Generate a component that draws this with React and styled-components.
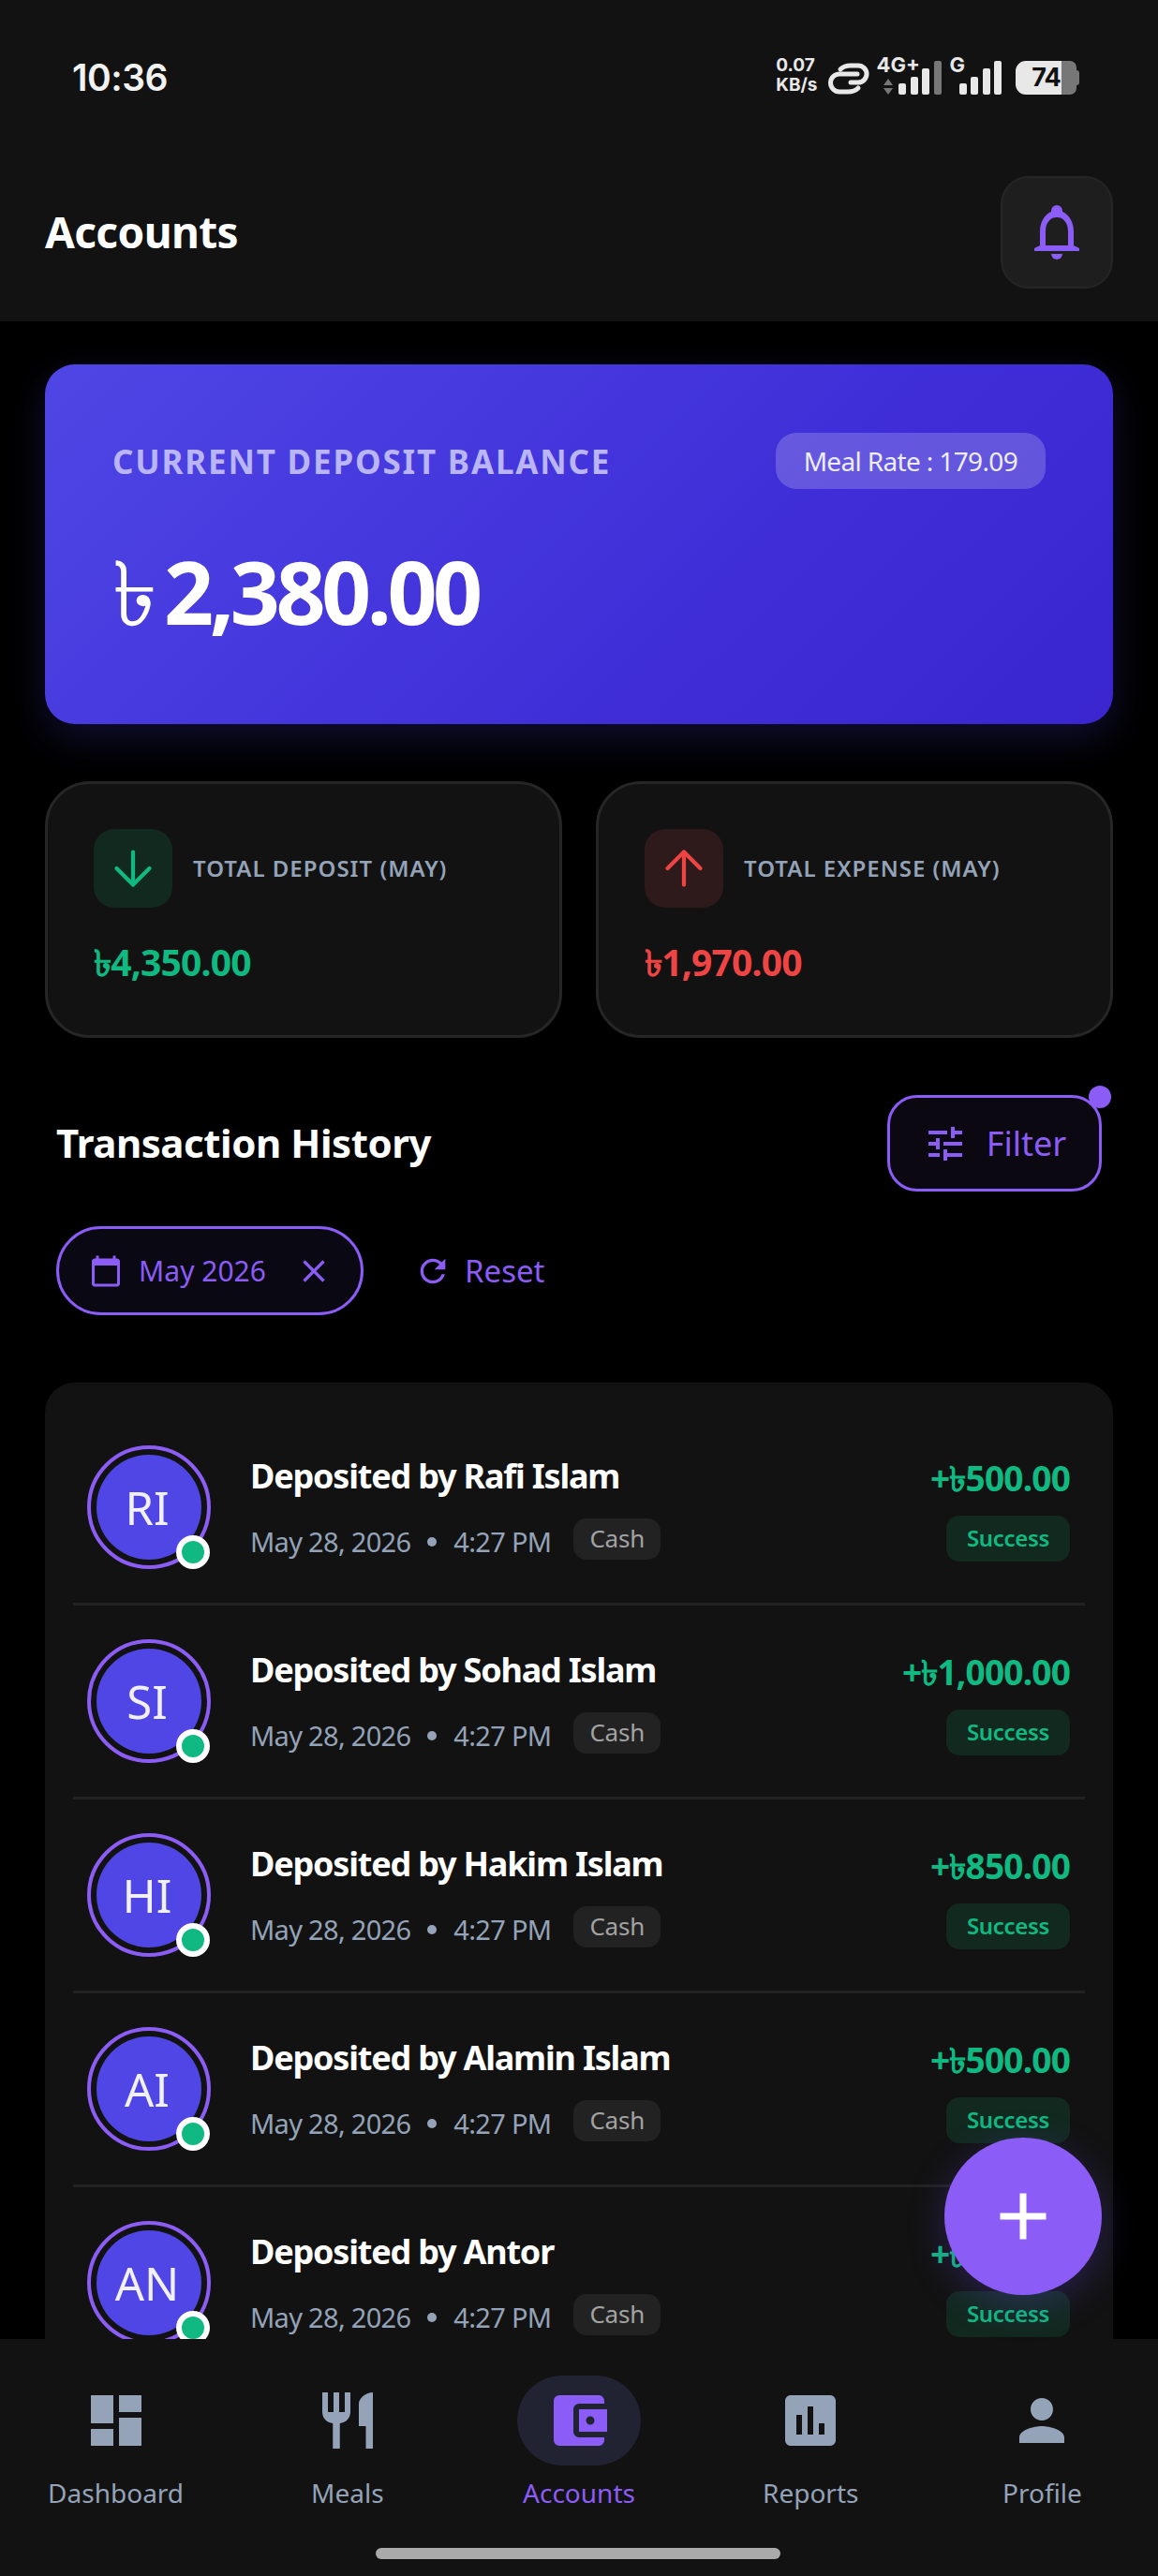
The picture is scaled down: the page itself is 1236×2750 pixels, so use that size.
import React from "react";
import styled, { createGlobalStyle } from "styled-components";
import { ArrowDown, ArrowUp } from "lucide-react";
import {
  MdDashboard,
  MdRestaurant,
  MdAccountBalanceWallet,
  MdAssessment,
  MdPerson,
  MdTune,
  MdCalendarToday,
  MdClose,
  MdRefresh,
  MdAdd,
} from "react-icons/md";

const GlobalStyle = createGlobalStyle`
  html, body {
    margin: 0;
    padding: 0;
    background: #000;
  }
  * {
    box-sizing: border-box;
  }
`;

const PURPLE = "#8b5cf6";
const GREEN = "#10b981";
const RED = "#ef4444";
const SLATE = "#94a3b8";
const FONT = `"Noto Sans", "Open Sans", "DejaVu Sans", sans-serif`;

const Phone = styled.div`
  position: relative;
  width: 1236px;
  height: 2750px;
  background: #000;
  overflow: hidden;
  display: flex;
  flex-direction: column;
  font-family: ${FONT};
  color: #fff;
`;

const Header = styled.header`
  flex: none;
  height: 343px;
  background: #121212;
`;

const StatusBar = styled.div`
  height: 164px;
  padding: 0 84px 0 77px;
  display: flex;
  align-items: center;
  justify-content: space-between;
`;

const Clock = styled.div`
  font-family: Inter, sans-serif;
  font-size: 39px;
  font-weight: 600;
  letter-spacing: -0.5px;
  color: #f2f2f2;
`;

const StatusIcons = styled.div`
  display: flex;
  align-items: flex-end;
  height: 42px;
  margin-top: -5px;
  font-family: Inter, sans-serif;
  font-weight: 700;
  color: #e8e8e8;
`;

const NetSpeed = styled.div`
  font-size: 19px;
  line-height: 21px;
  margin-right: 11px;
`;

const LinkIcon = styled.svg`
  width: 46px;
  height: 36px;
  margin-right: 6px;
`;

const Carrier = styled.div`
  position: relative;
  display: flex;
  align-items: flex-end;
  gap: 4.5px;
  height: 42px;
  padding-left: ${(p) => p.$pad}px;
  margin-right: ${(p) => p.$gap}px;
`;

const CarrierLabel = styled.span`
  position: absolute;
  left: 0;
  top: -2px;
  font-size: 22px;
  line-height: 24px;
`;

const Updown = styled.svg`
  width: 10px;
  height: 17px;
  margin-right: 2px;
`;

const Bar = styled.span`
  width: 8px;
  height: ${(p) => p.$h}px;
  border-radius: 2px;
  background: ${(p) => (p.$off ? "#777" : "#e8e8e8")};
`;

const Battery = styled.div`
  width: 65px;
  height: 36px;
  border-radius: 11px 7px 7px 11px;
  background: linear-gradient(90deg, #e8e8e8 76%, #777 76%);
  color: #111;
  font-size: 27px;
  line-height: 36px;
  text-align: center;
  letter-spacing: -1px;
`;

const BatteryCap = styled.span`
  width: 3px;
  height: 16px;
  margin-bottom: 10px;
  border-radius: 0 3px 3px 0;
  background: #777;
`;

const TitleRow = styled.div`
  padding: 24px 48px 35px;
  display: flex;
  align-items: center;
  justify-content: space-between;
`;

const PageTitle = styled.h1`
  margin: -2px 0 0;
  font-size: 46px;
  font-weight: 700;
  letter-spacing: -0.6px;
`;

const BellButton = styled.div`
  width: 120px;
  height: 120px;
  border-radius: 30px;
  background: #1e1e1e;
  border: 2px solid #262626;
  display: flex;
  align-items: center;
  justify-content: center;
`;

const BellIcon = styled.svg`
  width: 48px;
  height: 58px;
  fill: ${PURPLE};
`;

const Content = styled.main`
  flex: 1;
  min-height: 0;
  overflow: hidden;
  padding: 46px 48px 0;
`;

const BalanceCard = styled.section`
  height: 384px;
  padding: 73px 72px 0;
  border-radius: 32px;
  background: linear-gradient(135deg, #4f46e5 0%, #3f2fd8 60%, #3a25cf 100%);
  box-shadow: 0 14px 44px rgba(79, 70, 229, 0.22);
`;

const BalanceTop = styled.div`
  display: flex;
  align-items: center;
  justify-content: space-between;
`;

const BalanceLabel = styled.div`
  font-size: 35px;
  font-weight: 700;
  letter-spacing: 1.8px;
  color: #b9b5f6;
`;

const RatePill = styled.div`
  height: 60px;
  padding: 0 30px;
  border-radius: 22px;
  background: rgba(255, 255, 255, 0.2);
  font-size: 28px;
  line-height: 60px;
  letter-spacing: -0.65px;
  color: #eeedff;
`;

const BalanceAmount = styled.div`
  margin-top: 54px;
  display: flex;
  align-items: center;
  gap: 7px;
  font-size: 93px;
  line-height: 110px;
  font-weight: 700;
  letter-spacing: -4.5px;
`;

const BalanceSign = styled.span`
  font-size: 96px;
  font-weight: 400;
  letter-spacing: 0;
`;

const StatGrid = styled.section`
  margin-top: 61px;
  display: grid;
  grid-template-columns: 1fr 1fr;
  gap: 36px;
`;

const StatCard = styled.div`
  height: 274px;
  padding: 48px 49px 0;
  border-radius: 48px;
  background: #121212;
  border: 3px solid #262626;
`;

const StatHead = styled.div`
  display: flex;
  align-items: center;
  gap: 24px;
`;

const StatIcon = styled.div`
  flex: none;
  width: 84px;
  height: 84px;
  border-radius: 22px;
  display: flex;
  align-items: center;
  justify-content: center;
  background: ${(p) => (p.$tone === "up" ? "#2e1a1a" : "#12291f")};
  color: ${(p) => (p.$tone === "up" ? RED : GREEN)};
`;

const StatLabel = styled.div`
  margin: -2px 0 0 -2px;
  font-size: 24px;
  font-weight: 600;
  letter-spacing: 1px;
  color: ${SLATE};
`;

const StatValue = styled.div`
  margin-top: 33px;
  font-size: 39px;
  line-height: 50px;
  font-weight: 700;
  letter-spacing: -0.8px;
  color: ${(p) => (p.$tone === "up" ? RED : GREEN)};
`;

const HistoryHead = styled.div`
  margin-top: 61px;
  padding: 0 12px;
  display: flex;
  align-items: center;
  justify-content: space-between;
`;

const HistoryTitle = styled.h2`
  margin: -2px 0 0;
  font-size: 42px;
  font-weight: 700;
  letter-spacing: -0.45px;
`;

const FilterButton = styled.div`
  position: relative;
  width: 229px;
  height: 103px;
  border: 3px solid ${PURPLE};
  border-radius: 32px;
  background: #0b0812;
  display: flex;
  align-items: center;
  justify-content: center;
  gap: 20px;
  color: ${PURPLE};
  font-size: 36px;
`;

const FilterDot = styled.span`
  position: absolute;
  top: -13px;
  right: -13px;
  width: 24px;
  height: 24px;
  border-radius: 50%;
  background: ${PURPLE};
`;

const ChipRow = styled.div`
  margin-top: 37px;
  padding: 0 12px;
  display: flex;
  align-items: center;
  gap: 54px;
  color: ${PURPLE};
`;

const DateChip = styled.div`
  width: 328px;
  height: 95px;
  padding: 0 30px 0 32px;
  border: 3px solid ${PURPLE};
  border-radius: 48px;
  background: #0a0812;
  display: flex;
  align-items: center;
  justify-content: space-between;
  font-size: 30px;
`;

const DateText = styled.span`
  margin-right: 14px;
`;

const ResetLink = styled.div`
  display: flex;
  align-items: center;
  gap: 14px;
  font-size: 33px;
`;

const List = styled.section`
  margin-top: 72px;
  padding: 31px 30px 29px;
  border-radius: 32px 32px 0 0;
  background: #121212;
`;

const Row = styled.div`
  height: 207px;
  padding: 0 16px 0 15px;
  display: flex;
  align-items: center;
  gap: 42px;
  border-bottom: 3px solid #222;
`;

const Avatar = styled.div`
  position: relative;
  flex: none;
  width: 132px;
  height: 132px;
  border-radius: 50%;
  border: 4px solid ${PURPLE};
  padding: 6px;
`;

const AvatarFace = styled.div`
  width: 100%;
  height: 100%;
  padding-right: 4px;
  border-radius: 50%;
  background: #4f46e5;
  display: flex;
  align-items: center;
  justify-content: center;
  font-size: 49px;
  color: #f1f0ff;
`;

const OnlineBadge = styled.span`
  position: absolute;
  right: -3px;
  bottom: -4px;
  width: 36px;
  height: 36px;
  border-radius: 50%;
  background: ${GREEN};
  border: 6px solid #fff;
`;

const Info = styled.div`
  flex: 1;
  min-width: 0;
  padding-top: 3px;
`;

const RowTitle = styled.div`
  font-size: 36px;
  line-height: 50px;
  font-weight: 700;
  letter-spacing: -1.2px;
`;

const Meta = styled.div`
  margin-top: 20px;
  display: flex;
  align-items: center;
  font-size: 29px;
  line-height: 50px;
  letter-spacing: -0.7px;
  color: ${SLATE};
`;

const MetaDot = styled.span`
  width: 10px;
  height: 10px;
  border-radius: 50%;
  background: ${SLATE};
  margin: 0 18px;
`;

const MethodTag = styled.span`
  margin: -6px 0 0 24px;
  height: 44px;
  padding: 0 17px;
  border-radius: 14px;
  background: #222;
  font-size: 26px;
  line-height: 42px;
  letter-spacing: -0.2px;
  color: #a3a3a3;
`;

const RowSide = styled.div`
  flex: none;
  display: flex;
  flex-direction: column;
  align-items: flex-end;
  padding-top: 2px;
`;

const RowAmount = styled.div`
  font-size: 37px;
  line-height: 50px;
  font-weight: 700;
  letter-spacing: -0.8px;
  color: ${GREEN};
`;

const StatusTag = styled.div`
  margin-top: 15px;
  width: 132px;
  height: 49px;
  border-radius: 14px;
  background: #12291f;
  text-align: center;
  font-size: 24px;
  line-height: 47px;
  font-weight: 600;
  letter-spacing: -0.3px;
  color: ${GREEN};
`;

const Fab = styled.div`
  position: absolute;
  left: 1008px;
  top: 2282px;
  width: 168px;
  height: 168px;
  border-radius: 50%;
  background: ${PURPLE};
  box-shadow: 0 10px 40px rgba(99, 70, 220, 0.3);
  display: flex;
  align-items: center;
  justify-content: center;
  color: #fff;
  font-size: 84px;
`;

const BottomNav = styled.nav`
  flex: none;
  height: 253px;
  background: #121212;
  display: grid;
  grid-template-columns: repeat(5, 1fr);
  padding-top: 39px;
  position: relative;
`;

const NavItem = styled.div`
  display: flex;
  flex-direction: column;
  align-items: center;
  color: ${(p) => (p.$active ? PURPLE : SLATE)};
`;

const NavIcon = styled.div`
  width: 132px;
  height: 96px;
  border-radius: 48px;
  background: ${(p) => (p.$active ? "#212333" : "transparent")};
  display: flex;
  align-items: center;
  justify-content: center;
  font-size: 72px;
`;

const NavLabel = styled.div`
  margin-top: 9px;
  font-size: 28px;
  line-height: 40px;
`;

const HomeBar = styled.div`
  position: absolute;
  left: 401px;
  bottom: 18px;
  width: 432px;
  height: 12px;
  border-radius: 6px;
  background: #aaa;
`;

const transactions = [
  { initials: "RI", name: "Rafi Islam", amount: "500.00" },
  { initials: "SI", name: "Sohad Islam", amount: "1,000.00" },
  { initials: "HI", name: "Hakim Islam", amount: "850.00" },
  { initials: "AI", name: "Alamin Islam", amount: "500.00" },
  { initials: "AN", name: "Antor", amount: "500.00" },
];

const navItems = [
  { label: "Dashboard", Icon: MdDashboard },
  { label: "Meals", Icon: MdRestaurant },
  { label: "Accounts", Icon: MdAccountBalanceWallet, active: true },
  { label: "Reports", Icon: MdAssessment },
  { label: "Profile", Icon: MdPerson },
];

const App = () => {
  return (
    <Phone>
      <GlobalStyle />
      <Header>
        <StatusBar>
          <Clock>10:36</Clock>
          <StatusIcons>
            <NetSpeed>
              0.07
              <br />
              KB/s
            </NetSpeed>
            <LinkIcon viewBox="0 0 46 36" fill="none" stroke="#e8e8e8" strokeWidth="5" strokeLinecap="round">
              <path d="M13 9c3-3 7-4 11-4h8a9 9 0 0 1 0 18h-8" />
              <path d="M31 14H12a9.5 9.5 0 0 0 0 19h9c4 0 8-1 11-4" />
            </LinkIcon>
            <Carrier $pad={7} $gap={9}>
              <CarrierLabel>4G+</CarrierLabel>
              <Updown viewBox="0 0 10 17" fill="#777">
                <path d="M5 0l5 7H0zM5 17L0 10h10z" />
              </Updown>
              <Bar $h={12} />
              <Bar $h={19} />
              <Bar $h={28} />
              <Bar $h={36} $off />
            </Carrier>
            <Carrier $pad={10} $gap={15}>
              <CarrierLabel>G</CarrierLabel>
              <Bar $h={12} />
              <Bar $h={19} />
              <Bar $h={28} />
              <Bar $h={36} />
            </Carrier>
            <Battery>74</Battery>
            <BatteryCap />
          </StatusIcons>
        </StatusBar>
        <TitleRow>
          <PageTitle>Accounts</PageTitle>
          <BellButton>
            <BellIcon viewBox="0 0 48 58">
              <path
                fillRule="evenodd"
                d="M24 0a6 6 0 0 1 6 6v1c7 3 12 11 12 21v15l6 3v3H0v-3l6-3V28C6 18 11 10 18 7V6a6 6 0 0 1 6-6zM12 43h24V28c0-9-5-15-12-15s-12 6-12 15z"
              />
              <path d="M18 52h12a6 6 0 0 1-12 0z" />
            </BellIcon>
          </BellButton>
        </TitleRow>
      </Header>

      <Content>
        <BalanceCard>
          <BalanceTop>
            <BalanceLabel>CURRENT DEPOSIT BALANCE</BalanceLabel>
            <RatePill>Meal Rate : 179.09</RatePill>
          </BalanceTop>
          <BalanceAmount>
            <BalanceSign>৳</BalanceSign>
            2,380.00
          </BalanceAmount>
        </BalanceCard>

        <StatGrid>
          <StatCard>
            <StatHead>
              <StatIcon>
                <ArrowDown size={60} strokeWidth={1.7} />
              </StatIcon>
              <StatLabel>TOTAL DEPOSIT (MAY)</StatLabel>
            </StatHead>
            <StatValue>৳4,350.00</StatValue>
          </StatCard>
          <StatCard>
            <StatHead>
              <StatIcon $tone="up">
                <ArrowUp size={60} strokeWidth={1.7} />
              </StatIcon>
              <StatLabel>TOTAL EXPENSE (MAY)</StatLabel>
            </StatHead>
            <StatValue $tone="up">৳1,970.00</StatValue>
          </StatCard>
        </StatGrid>

        <HistoryHead>
          <HistoryTitle>Transaction History</HistoryTitle>
          <FilterButton>
            <MdTune size={48} />
            Filter
            <FilterDot />
          </FilterButton>
        </HistoryHead>

        <ChipRow>
          <DateChip>
            <MdCalendarToday size={36} />
            <DateText>May 2026</DateText>
            <MdClose size={40} />
          </DateChip>
          <ResetLink>
            <MdRefresh size={40} />
            Reset
          </ResetLink>
        </ChipRow>

        <List>
          {transactions.map((t) => (
            <Row key={t.initials}>
              <Avatar>
                <AvatarFace>{t.initials}</AvatarFace>
                <OnlineBadge />
              </Avatar>
              <Info>
                <RowTitle>Deposited by {t.name}</RowTitle>
                <Meta>
                  May 28, 2026
                  <MetaDot />
                  4:27 PM
                  <MethodTag>Cash</MethodTag>
                </Meta>
              </Info>
              <RowSide>
                <RowAmount>+৳{t.amount}</RowAmount>
                <StatusTag>Success</StatusTag>
              </RowSide>
            </Row>
          ))}
        </List>
      </Content>

      <BottomNav>
        {navItems.map(({ label, Icon, active }) => (
          <NavItem key={label} $active={active}>
            <NavIcon $active={active}>
              <Icon />
            </NavIcon>
            <NavLabel>{label}</NavLabel>
          </NavItem>
        ))}
        <HomeBar />
      </BottomNav>

      <Fab>
        <MdAdd />
      </Fab>
    </Phone>
  );
};

export default App;
